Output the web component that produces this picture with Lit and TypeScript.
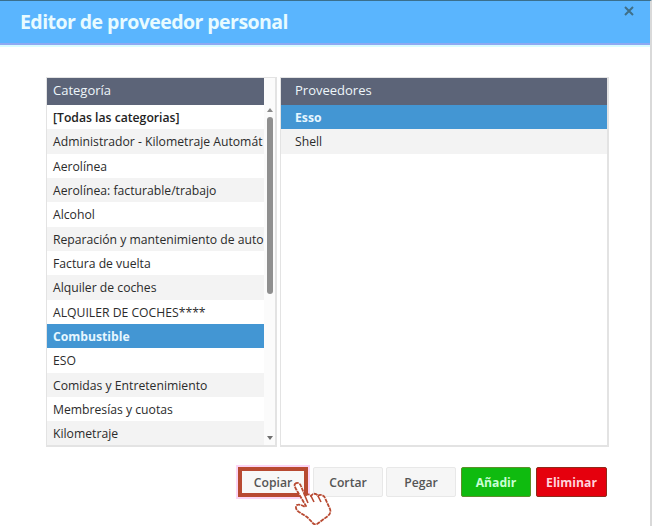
import { LitElement, html, css, svg } from "lit";
import { customElement } from "lit/decorators.js";

const CATEGORIES = [
  "[Todas las categorias]",
  "Administrador - Kilometraje Automát",
  "Aerolínea",
  "Aerolínea: facturable/trabajo",
  "Alcohol",
  "Reparación y mantenimiento de auto",
  "Factura de vuelta",
  "Alquiler de coches",
  "ALQUILER DE COCHES****",
  "Combustible",
  "ESO",
  "Comidas y Entretenimiento",
  "Membresías y cuotas",
  "Kilometraje",
];

@customElement("app-root")
export class AppRoot extends LitElement {
  static styles = css`
    :host {
      display: block;
      width: 652px;
      height: 526px;
      position: relative;
      overflow: hidden;
      background: #fff;
      font-family: "Open Sans", "Noto Sans", sans-serif;
      color: #333;
    }
    .frame {
      display: flex;
      flex-direction: column;
      height: 526px;
      box-sizing: border-box;
      border-top: 1px solid #3a6f8c;
      border-right: 2px solid #d9d9d9;
    }
    .title-bar {
      flex: none;
      height: 44px;
      box-sizing: border-box;
      background: #5ab5fe;
      border-bottom: 2px solid #8fa9f2;
      box-shadow: 0 2px 0 #d8fdff;
      display: flex;
      justify-content: space-between;
      padding: 9px 15px 0 20px;
    }
    h1 {
      margin: 0;
      font-size: 19.5px;
      line-height: 24px;
      font-weight: 700;
      letter-spacing: -0.55px;
      color: #e8fbff;
    }
    .close {
      margin-top: -5px;
      width: 12px;
      height: 12px;
    }
    .panels {
      flex: none;
      display: flex;
      gap: 3px;
      margin: 32px 0 0 46px;
      height: 370px;
    }
    .panel {
      box-sizing: border-box;
      height: 370px;
      border: 2px solid #e3e3e3;
      border-top-width: 1px;
      border-left-width: 1px;
      display: flex;
      background: #fff;
    }
    .panel.left { width: 231px; }
    .panel.right { width: 329px; }
    .col { flex: 1; min-width: 0; overflow: hidden; }
    .head {
      height: 27px;
      box-sizing: border-box;
      background: #5c6478;
      color: #eef6fa;
      font-size: 13px;
      line-height: 25px;
      padding-left: 6px;
      white-space: nowrap;
    }
    .right .head, .right .row { padding-left: 14px; }
    .row {
      height: 24.35px;
      box-sizing: border-box;
      font-size: 12.2px;
      line-height: 25.6px;
      padding-left: 6px;
      white-space: nowrap;
      overflow: hidden;
      color: #2b2b2b;
    }
    .row:nth-child(even) { background: #f3f3f3; }
    .row.bold { font-weight: 600; color: #222; }
    .row.sel {
      background: #4396d3;
      color: #e6f7ff;
      font-weight: 700;
    }
    .track {
      flex: none;
      width: 11px;
      background: #fbfbfb;
      display: flex;
      flex-direction: column;
      align-items: center;
      padding-top: 33px;
      box-sizing: border-box;
      position: relative;
    }
    .thumb {
      width: 6px;
      height: 177px;
      margin-top: 6px;
      border-radius: 3px;
      background: #8f8f8f;
    }
    .arrow {
      position: absolute;
      left: 3px;
      width: 0;
      height: 0;
      border-left: 3px solid transparent;
      border-right: 3px solid transparent;
    }
    .arrow.up { top: 30px; border-bottom: 4px solid #8a8a8a; }
    .arrow.down { bottom: 5px; border-top: 4px solid #6f6f6f; }
    .actions {
      flex: none;
      display: flex;
      margin: 20px 0 0 238px;
      gap: 5px;
    }
    button {
      font: inherit;
      font-size: 12.2px;
      font-weight: 600;
      width: 70px;
      height: 30px;
      box-sizing: border-box;
      padding: 0;
      border-radius: 2px;
      border: 1px solid #e8e8e8;
      background: #f6f6f6;
      color: #555;
    }
    button.copy {
      border: 4px solid #b84a32;
      border-radius: 0;
      background: #f8f8f8;
      box-shadow: 0 0 0 2px #fbd5f6;
    }
    button.paste { margin-left: -2px; }
    button.add {
      background: #0fbb0f;
      border-color: #5c8f2a;
      color: #c8ffd4;
      font-weight: 700;
    }
    button.del {
      width: 71px;
      background: #e5000d;
      border-color: #8f2a1a;
      color: #ffd3dc;
      font-weight: 700;
    }
    .hand {
      position: absolute;
      left: 292px;
      top: 481px;
      width: 44px;
      height: 44px;
    }
  `;

  render() {
    return html`
      <div class="frame">
        <div class="title-bar">
          <h1>Editor de proveedor personal</h1>
          <svg class="close" viewBox="0 0 12 12">
            <path d="M2 2 L10 10 M10 2 L2 10" stroke="#3f6f88" stroke-width="2" fill="none" />
          </svg>
        </div>
        <div class="panels">
          <div class="panel left">
            <div class="col">
              <div class="head">Categoría</div>
              <div>
                ${CATEGORIES.map(
                  (c, i) => html`<div class="row ${i === 0 ? "bold" : ""} ${c === "Combustible" ? "sel" : ""}">${c}</div>`
                )}
              </div>
            </div>
            <div class="track">
              <span class="arrow up"></span>
              <div class="thumb"></div>
              <span class="arrow down"></span>
            </div>
          </div>
          <div class="panel right">
            <div class="col">
              <div class="head">Proveedores</div>
              <div>
                <div class="row sel">Esso</div>
                <div class="row">Shell</div>
              </div>
            </div>
          </div>
        </div>
        <div class="actions">
          <button class="copy">Copiar</button>
          <button>Cortar</button>
          <button class="paste">Pegar</button>
          <button class="add">Añadir</button>
          <button class="del">Eliminar</button>
        </div>
      </div>
      <svg class="hand" viewBox="0 0 44 44">
        ${svg`<path
          d="M3 3 C5 1 8 2 9 5 L13 15 C15 13 18 13 19 15 C21 12 24 12 26 15 C28 13 32 14 33 17 L38 28 C39 31 38 33 36 35 L25 43 C23 44 21 43 20 41 L15 36 L7 31 C4 29 3 26 5 24 C7 23 10 24 13 26 L14 25 L4 8 C3 6 2 4 3 3 Z"
          fill="#fff" stroke="#b84a32" stroke-width="1.8" stroke-linejoin="round" stroke-dasharray="4 0.8" />
          <path d="M13 15 L16 22 M19 15 L22 21 M26 15 L29 21" stroke="#b84a32" stroke-width="1.6" fill="none" />`}
      </svg>
    `;
  }
}
